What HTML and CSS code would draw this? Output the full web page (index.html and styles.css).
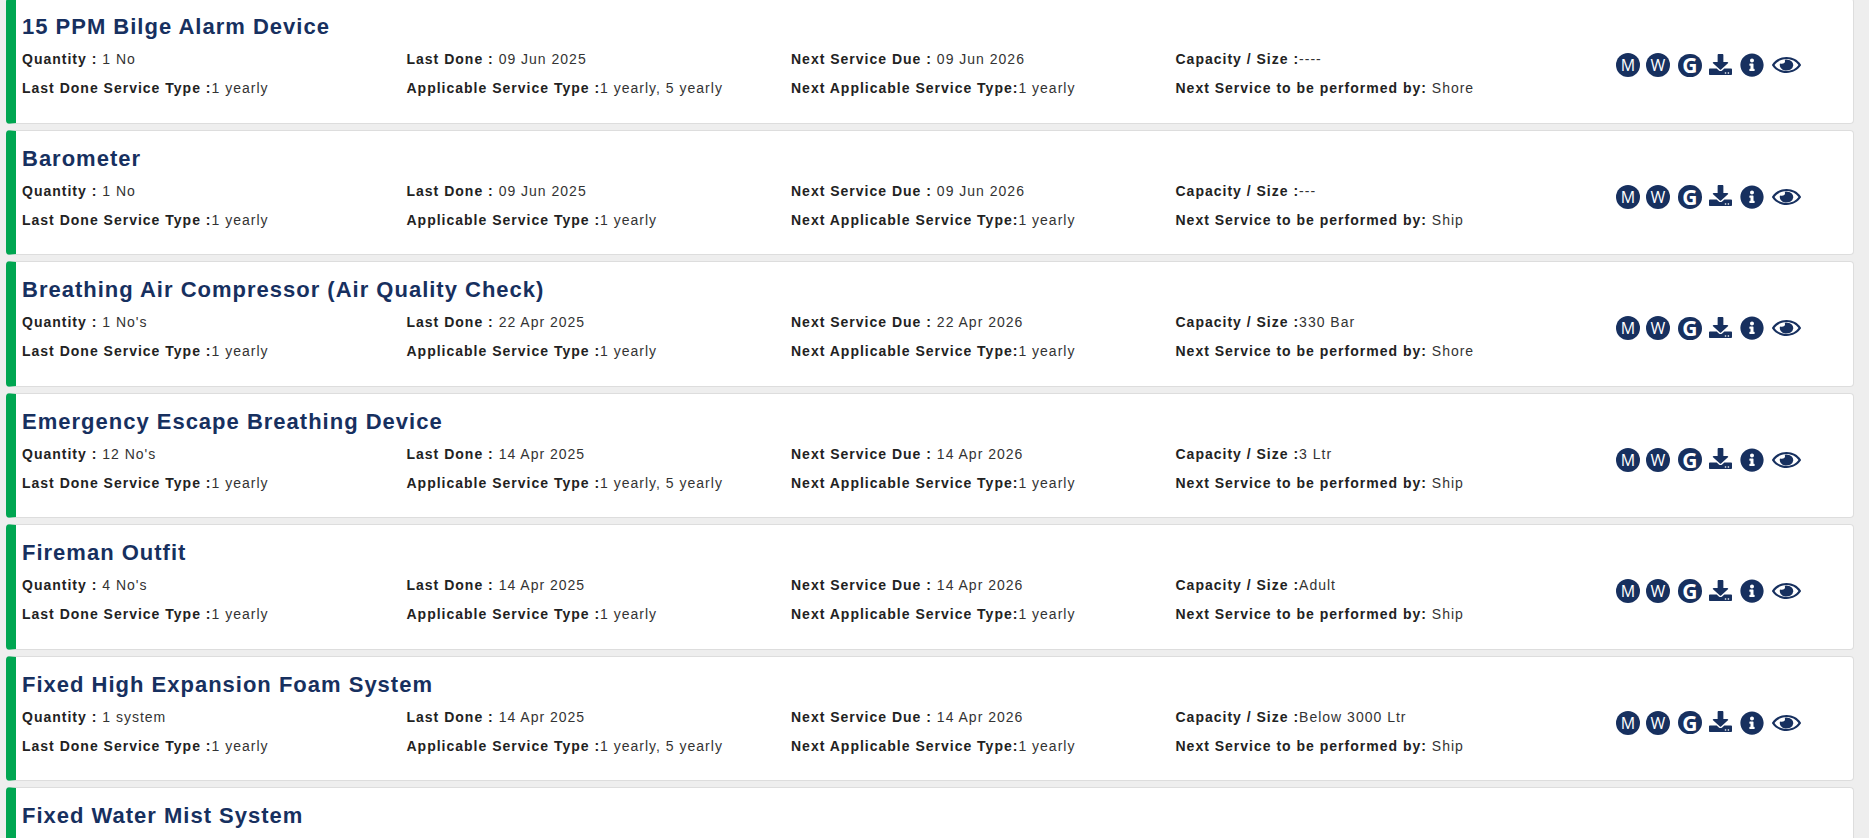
FILE: index.html
```html
<!DOCTYPE html>
<html lang="en">
<head>
    <meta charset="UTF-8">
    <meta name="viewport" content="width=device-width, initial-scale=1.0">
    <title>Service Equipment List</title>
    <link rel="stylesheet" href="styles.css">
</head>
<body>
    <svg class="icon-defs" aria-hidden="true">
        <symbol id="i-download" viewBox="0 0 512 512" preserveAspectRatio="none"><path d="M216 0h80c13.3 0 24 10.7 24 24v168h87.7c17.8 0 26.7 21.5 14.1 34.1L269.7 378.3c-7.5 7.5-19.8 7.5-27.3 0L90.1 226.1c-12.6-12.6-3.7-34.1 14.1-34.1H192V24c0-13.3 10.7-24 24-24zm296 376v112c0 13.3-10.7 24-24 24H24c-13.3 0-24-10.7-24-24V376c0-13.3 10.7-24 24-24h146.7l49 49c20.1 20.1 52.5 20.1 72.6 0l49-49H488c13.3 0 24 10.7 24 24zm-124 88c0-11-9-20-20-20s-20 9-20 20 9 20 20 20 20-9 20-20zm64 0c0-11-9-20-20-20s-20 9-20 20 9 20 20 20 20-9 20-20z"/></symbol>
        <symbol id="i-info" viewBox="0 0 512 512"><path d="M256 8C119.043 8 8 119.083 8 256c0 136.997 111.043 248 248 248s248-111.003 248-248C504 119.083 392.957 8 256 8zm0 110c23.196 0 42 18.804 42 42s-18.804 42-42 42-42-18.804-42-42 18.804-42 42-42zm56 254c0 6.627-5.373 12-12 12h-88c-6.627 0-12-5.373-12-12v-24c0-6.627 5.373-12 12-12h12v-64h-12c-6.627 0-12-5.373-12-12v-24c0-6.627 5.373-12 12-12h64c6.627 0 12 5.373 12 12v100h12c6.627 0 12 5.373 12 12v24z"/></symbol>
        <symbol id="i-eye" viewBox="0 64 576 384" preserveAspectRatio="none">
            <path transform="translate(288 256) scale(1.2) translate(-288 -256)" d="M288 144a110.94 110.94 0 0 0-31.24 5 55.4 55.4 0 0 1 7.24 27 56 56 0 0 1-56 56 55.4 55.4 0 0 1-27-7.24A111.71 111.71 0 1 0 288 144z"/>
            <path d="M572.52 241.4C518.29 135.59 410.93 64 288 64S57.68 135.64 3.48 241.41a32.35 32.35 0 0 0 0 29.19C57.71 376.41 165.07 448 288 448s230.32-71.64 284.52-177.41a32.35 32.35 0 0 0 0-29.19zM288 400c-98.65 0-189.09-55-237.93-144C98.91 167 189.34 112 288 112s189.09 55 237.93 144C477.1 345 386.66 400 288 400z"/>
        </symbol>
    </svg>

    <div class="card">
        <div class="card-main">
            <h2>15 PPM Bilge Alarm Device</h2>
            <div class="fields">
                <p><b>Quantity : </b>1 No</p>
                <p><b>Last Done : </b>09 Jun 2025</p>
                <p><b>Next Service Due : </b>09 Jun 2026</p>
                <p><b>Capacity / Size :</b>----</p>
                <p><b>Last Done Service Type :</b>1 yearly</p>
                <p><b>Applicable Service Type :</b>1 yearly, 5 yearly</p>
                <p><b>Next Applicable Service Type:</b>1 yearly</p>
                <p><b>Next Service to be performed by: </b>Shore</p>
            </div>
        </div>
        <div class="actions">
            <span class="badge">M</span>
            <span class="badge">W</span>
            <span class="badge badge-g">G</span>
            <svg class="ic-download"><use href="#i-download"/></svg>
            <svg class="ic-info"><use href="#i-info"/></svg>
            <svg class="ic-eye"><use href="#i-eye"/></svg>
        </div>
    </div>

    <div class="card">
        <div class="card-main">
            <h2>Barometer</h2>
            <div class="fields">
                <p><b>Quantity : </b>1 No</p>
                <p><b>Last Done : </b>09 Jun 2025</p>
                <p><b>Next Service Due : </b>09 Jun 2026</p>
                <p><b>Capacity / Size :</b>---</p>
                <p><b>Last Done Service Type :</b>1 yearly</p>
                <p><b>Applicable Service Type :</b>1 yearly</p>
                <p><b>Next Applicable Service Type:</b>1 yearly</p>
                <p><b>Next Service to be performed by: </b>Ship</p>
            </div>
        </div>
        <div class="actions">
            <span class="badge">M</span>
            <span class="badge">W</span>
            <span class="badge badge-g">G</span>
            <svg class="ic-download"><use href="#i-download"/></svg>
            <svg class="ic-info"><use href="#i-info"/></svg>
            <svg class="ic-eye"><use href="#i-eye"/></svg>
        </div>
    </div>

    <div class="card">
        <div class="card-main">
            <h2>Breathing Air Compressor (Air Quality Check)</h2>
            <div class="fields">
                <p><b>Quantity : </b>1 No's</p>
                <p><b>Last Done : </b>22 Apr 2025</p>
                <p><b>Next Service Due : </b>22 Apr 2026</p>
                <p><b>Capacity / Size :</b>330 Bar</p>
                <p><b>Last Done Service Type :</b>1 yearly</p>
                <p><b>Applicable Service Type :</b>1 yearly</p>
                <p><b>Next Applicable Service Type:</b>1 yearly</p>
                <p><b>Next Service to be performed by: </b>Shore</p>
            </div>
        </div>
        <div class="actions">
            <span class="badge">M</span>
            <span class="badge">W</span>
            <span class="badge badge-g">G</span>
            <svg class="ic-download"><use href="#i-download"/></svg>
            <svg class="ic-info"><use href="#i-info"/></svg>
            <svg class="ic-eye"><use href="#i-eye"/></svg>
        </div>
    </div>

    <div class="card">
        <div class="card-main">
            <h2>Emergency Escape Breathing Device</h2>
            <div class="fields">
                <p><b>Quantity : </b>12 No's</p>
                <p><b>Last Done : </b>14 Apr 2025</p>
                <p><b>Next Service Due : </b>14 Apr 2026</p>
                <p><b>Capacity / Size :</b>3 Ltr</p>
                <p><b>Last Done Service Type :</b>1 yearly</p>
                <p><b>Applicable Service Type :</b>1 yearly, 5 yearly</p>
                <p><b>Next Applicable Service Type:</b>1 yearly</p>
                <p><b>Next Service to be performed by: </b>Ship</p>
            </div>
        </div>
        <div class="actions">
            <span class="badge">M</span>
            <span class="badge">W</span>
            <span class="badge badge-g">G</span>
            <svg class="ic-download"><use href="#i-download"/></svg>
            <svg class="ic-info"><use href="#i-info"/></svg>
            <svg class="ic-eye"><use href="#i-eye"/></svg>
        </div>
    </div>

    <div class="card">
        <div class="card-main">
            <h2>Fireman Outfit</h2>
            <div class="fields">
                <p><b>Quantity : </b>4 No's</p>
                <p><b>Last Done : </b>14 Apr 2025</p>
                <p><b>Next Service Due : </b>14 Apr 2026</p>
                <p><b>Capacity / Size :</b>Adult</p>
                <p><b>Last Done Service Type :</b>1 yearly</p>
                <p><b>Applicable Service Type :</b>1 yearly</p>
                <p><b>Next Applicable Service Type:</b>1 yearly</p>
                <p><b>Next Service to be performed by: </b>Ship</p>
            </div>
        </div>
        <div class="actions">
            <span class="badge">M</span>
            <span class="badge">W</span>
            <span class="badge badge-g">G</span>
            <svg class="ic-download"><use href="#i-download"/></svg>
            <svg class="ic-info"><use href="#i-info"/></svg>
            <svg class="ic-eye"><use href="#i-eye"/></svg>
        </div>
    </div>

    <div class="card">
        <div class="card-main">
            <h2>Fixed High Expansion Foam System</h2>
            <div class="fields">
                <p><b>Quantity : </b>1 system</p>
                <p><b>Last Done : </b>14 Apr 2025</p>
                <p><b>Next Service Due : </b>14 Apr 2026</p>
                <p><b>Capacity / Size :</b>Below 3000 Ltr</p>
                <p><b>Last Done Service Type :</b>1 yearly</p>
                <p><b>Applicable Service Type :</b>1 yearly, 5 yearly</p>
                <p><b>Next Applicable Service Type:</b>1 yearly</p>
                <p><b>Next Service to be performed by: </b>Ship</p>
            </div>
        </div>
        <div class="actions">
            <span class="badge">M</span>
            <span class="badge">W</span>
            <span class="badge badge-g">G</span>
            <svg class="ic-download"><use href="#i-download"/></svg>
            <svg class="ic-info"><use href="#i-info"/></svg>
            <svg class="ic-eye"><use href="#i-eye"/></svg>
        </div>
    </div>

    <div class="card card-cut">
        <div class="card-main">
            <h2>Fixed Water Mist System</h2>
        </div>
    </div>
</body>
</html>
```

FILE: styles.css
```css
html, body {
    height: 100%;
    overflow: hidden;
}
body {
    margin: 0;
    padding: 0 15px 0 6px;
    background-color: #eeeeee;
    font-family: "Liberation Sans", Arial, sans-serif;
    color: #333333;
}
.icon-defs {
    display: none;
}
.card {
    display: flex;
    box-sizing: border-box;
    height: 125.45px;
    margin-bottom: 6px;
    padding: 16px 0 0 6px;
    background-color: #ffffff;
    border: 1px solid #dddddd;
    border-left: 10px solid #00a651;
    border-radius: 4px;
}
.card:first-of-type {
    margin-top: -1.6px;
}
/* last one runs off the bottom of the window */
.card-cut {
    height: 52px;
    margin-bottom: 0;
    border-bottom: 0;
    border-radius: 4px 4px 0 0;
}
.card-main {
    width: 1594px;
    flex: none;
}
h2 {
    margin: 0 0 12px;
    font-size: 22px;
    line-height: 24px;
    font-weight: bold;
    letter-spacing: 1px;
    color: #17305f;
}
.fields {
    display: grid;
    grid-template-columns: repeat(4, 384.5px);
    row-gap: 13px;
    width: 1290px;
}
.fields p {
    margin: 0;
    font-size: 14px;
    line-height: 16px;
    letter-spacing: 1px;
    white-space: nowrap;
}
.fields b {
    color: #222222;
}
.actions {
    display: flex;
    align-items: center;
    height: 26px;
    margin-top: 37px;
    color: #17305f;
}
.actions svg {
    fill: currentColor;
    flex: none;
}
.badge {
    display: flex;
    align-items: center;
    justify-content: center;
    width: 24px;
    height: 24px;
    margin-right: 6px;
    border-radius: 50%;
    background-color: #17305f;
    color: #ffffff;
    font-family: "Open Sans", sans-serif;
    font-size: 16px;
}
.badge + .badge {
    margin-right: 8px;
}
.badge-g {
    width: 23.5px;
    height: 23.5px;
    font-weight: bold;
    font-size: 21px;
}
.badge + .badge-g {
    margin-right: 7.5px;
}
.ic-download {
    width: 23px;
    height: 21px;
    margin-right: 8px;
    margin-bottom: 2px;
}
.ic-info {
    width: 24px;
    height: 24px;
    margin-right: 8px;
}
.ic-eye {
    width: 29px;
    height: 16px;
}
```
